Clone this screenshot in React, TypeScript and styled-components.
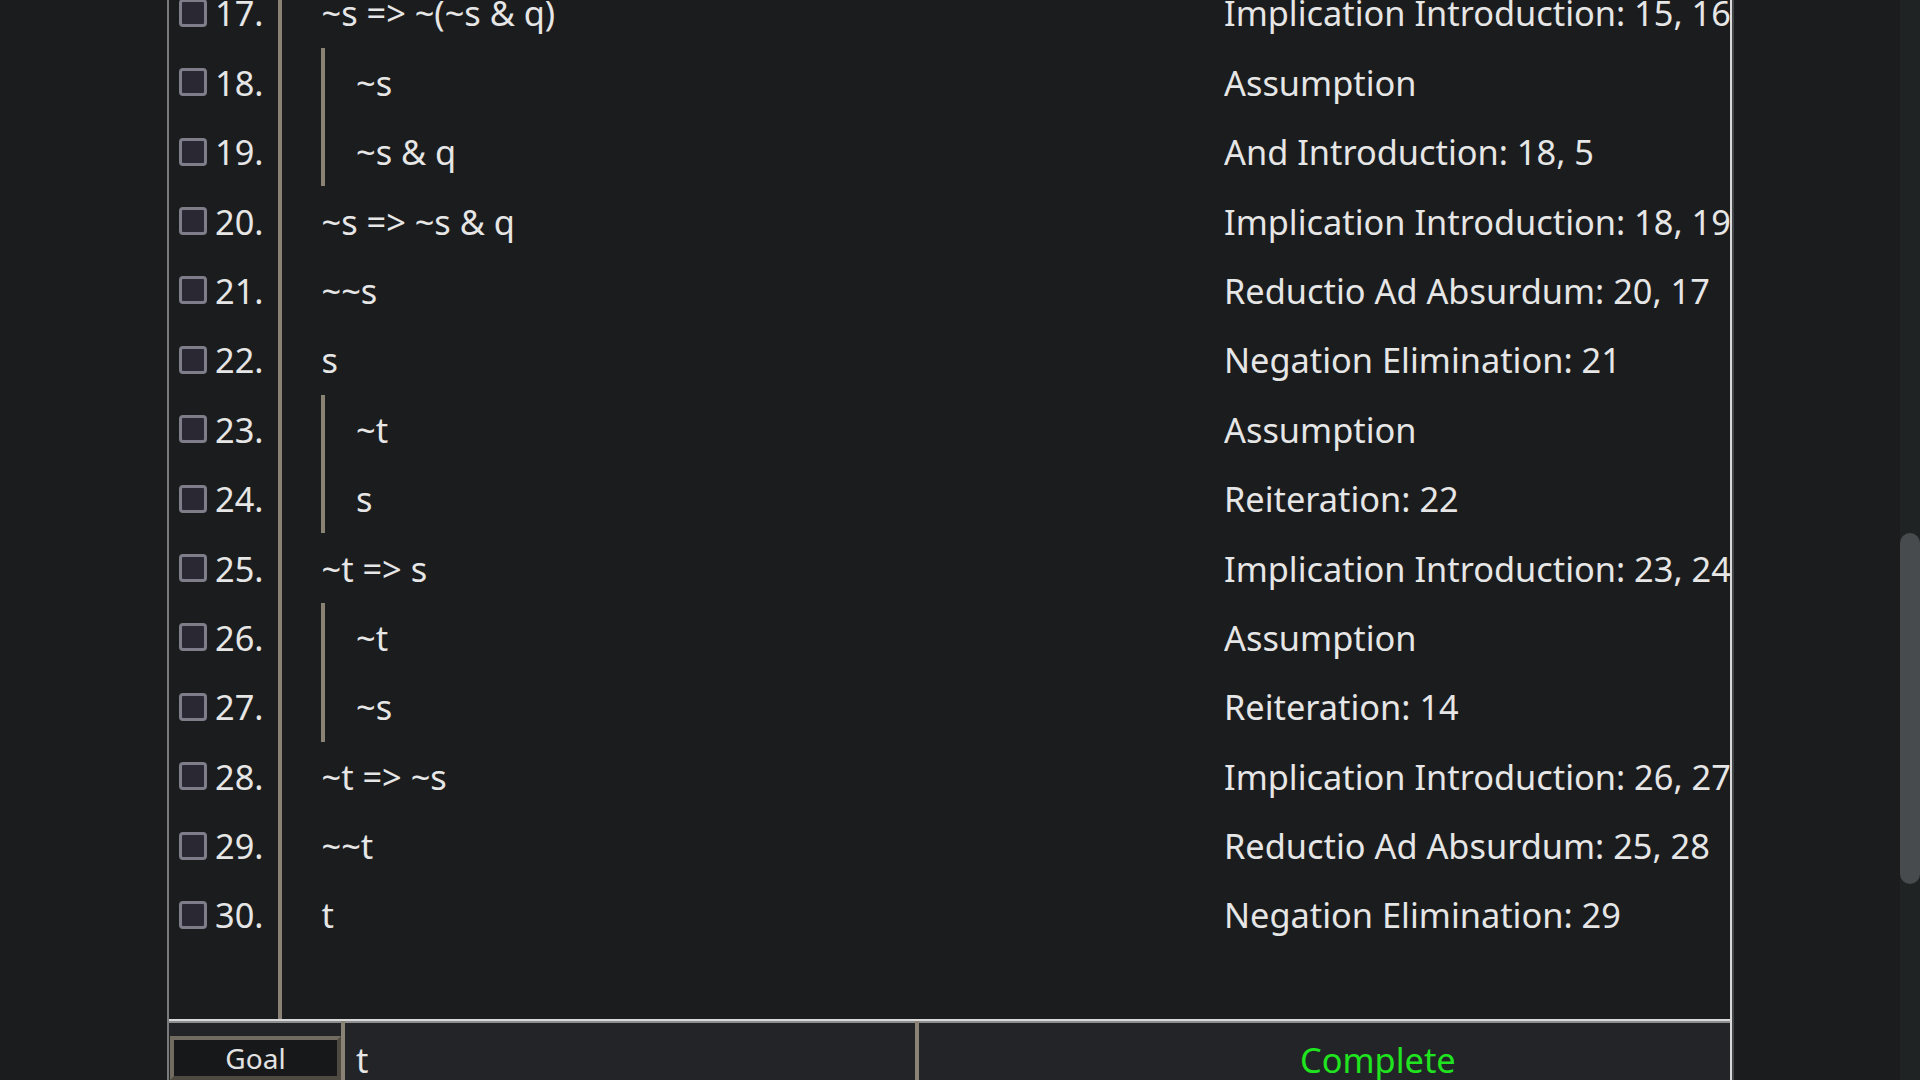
import React from "react";
import styled, { createGlobalStyle } from "styled-components";

const ROW_H = 69.4;
const SCROLL_OFFSET = 21.8;
const TAN = "#8a8274";
const FONT = 34.35;

const GlobalStyle = createGlobalStyle`
  html, body {
    margin: 0;
    padding: 0;
    background: #1b1c1e;
    overflow: hidden;
  }
  body {
    font-family: "Noto Sans", "Open Sans", sans-serif;
    color: #e6e6e6;
  }
`;

const Page = styled.div`
  display: flex;
  width: 100vw;
  height: 100vh;
  overflow: hidden;
  background: #1b1c1e;
`;

const Main = styled.div`
  flex: 1;
  display: flex;
  padding-left: 167px;
  min-width: 0;
`;

const Panel = styled.div`
  width: 1561px;
  display: flex;
  flex-direction: column;
  border-left: 2px solid #7a7a7a;
  border-right: 2px solid #d9d9d9;
  box-shadow: 2px 0 0 #44474a;
  flex: none;
  align-self: flex-start;
`;

const ListArea = styled.div`
  height: 1019px;
  overflow: hidden;
  display: flex;
  flex-direction: column;
`;

const Scroller = styled.div`
  flex: none;
  display: flex;
  margin-top: -${SCROLL_OFFSET}px;
  height: calc(100% + ${SCROLL_OFFSET}px);
`;

const Gutter = styled.div`
  width: 109px;
  flex: none;
  border-right: 4px solid ${TAN};
  display: flex;
  flex-direction: column;
`;

const GutterRow = styled.div`
  height: ${ROW_H}px;
  flex: none;
  display: flex;
  align-items: center;
  padding-left: 10px;
  gap: 8px;
  font-size: ${FONT}px;
  white-space: nowrap;
`;

const Checkbox = styled.span`
  width: 28px;
  height: 28px;
  box-sizing: border-box;
  border: 3px solid #7f7d89;
  border-radius: 4px;
  background: #2a2833;
  flex: none;
`;

const Body = styled.div`
  flex: 1;
  min-width: 0;
  display: flex;
  flex-direction: column;
`;

const Subproof = styled.div`
  margin-left: 39px;
  border-left: 4px solid ${TAN};
  display: flex;
  flex-direction: column;
`;

const Line = styled.div<{ $sub?: boolean }>`
  height: ${ROW_H}px;
  flex: none;
  display: flex;
  align-items: center;
  font-size: ${FONT}px;
  white-space: nowrap;
  padding-left: ${(p) => (p.$sub ? 31 : 39.5)}px;
`;

const Formula = styled.span`
  flex: 1;
  min-width: 0;
`;

const Justification = styled.span`
  width: 506px;
  flex: none;
  overflow: hidden;
`;

const StatusBar = styled.div`
  display: flex;
  height: 76px;
  border-top: 2px solid #d8d8d8;
  box-shadow: inset 0 2px 0 #8f8f8f;
  background: #232427;
  font-size: ${FONT}px;
`;

const GoalCell = styled.div`
  width: 172px;
  flex: none;
  padding: 15px 0 0 1px;
  box-sizing: border-box;
`;

const GoalButton = styled.div`
  width: 171px;
  height: 44px;
  box-sizing: border-box;
  border: 4px solid;
  border-color: #726c60 #4e4a42 #4e4a42 #726c60;
  background: #17181a;
  font-size: 28px;
  color: #e2e2e2;
  display: flex;
  align-items: center;
  justify-content: center;
`;

const Cell = styled.div<{ $width?: number; $pad: number; $color?: string }>`
  ${(p) => (p.$width ? `width: ${p.$width}px; flex: none;` : "flex: 1;")}
  box-sizing: border-box;
  border-left: 4px solid ${TAN};
  padding-left: ${(p) => p.$pad}px;
  display: flex;
  align-items: center;
  color: ${(p) => p.$color ?? "#e6e6e6"};
  white-space: nowrap;
`;

const ScrollTrack = styled.div`
  width: 20px;
  flex: none;
  background: #202324;
  padding-top: 533px;
  box-sizing: border-box;
`;

const Thumb = styled.div`
  height: 351px;
  border-radius: 10px;
  background: #474b4d;
`;

type Row = { n: number; f: string; j: string };
type Block = { sub: boolean; rows: Row[] };

const blocks: Block[] = [
  { sub: false, rows: [{ n: 17, f: "~s => ~(~s & q)", j: "Implication Introduction: 15, 16" }] },
  {
    sub: true,
    rows: [
      { n: 18, f: "~s", j: "Assumption" },
      { n: 19, f: "~s & q", j: "And Introduction: 18, 5" },
    ],
  },
  {
    sub: false,
    rows: [
      { n: 20, f: "~s => ~s & q", j: "Implication Introduction: 18, 19" },
      { n: 21, f: "~~s", j: "Reductio Ad Absurdum: 20, 17" },
      { n: 22, f: "s", j: "Negation Elimination: 21" },
    ],
  },
  {
    sub: true,
    rows: [
      { n: 23, f: "~t", j: "Assumption" },
      { n: 24, f: "s", j: "Reiteration: 22" },
    ],
  },
  { sub: false, rows: [{ n: 25, f: "~t => s", j: "Implication Introduction: 23, 24" }] },
  {
    sub: true,
    rows: [
      { n: 26, f: "~t", j: "Assumption" },
      { n: 27, f: "~s", j: "Reiteration: 14" },
    ],
  },
  {
    sub: false,
    rows: [
      { n: 28, f: "~t => ~s", j: "Implication Introduction: 26, 27" },
      { n: 29, f: "~~t", j: "Reductio Ad Absurdum: 25, 28" },
      { n: 30, f: "t", j: "Negation Elimination: 29" },
    ],
  },
];

const allRows = blocks.flatMap((b) => b.rows);

const renderLines = (rows: Row[], sub: boolean) =>
  rows.map((r) => (
    <Line key={r.n} $sub={sub}>
      <Formula>{r.f}</Formula>
      <Justification>{r.j}</Justification>
    </Line>
  ));

export default function App() {
  return (
    <>
      <GlobalStyle />
      <Page>
        <Main>
          <Panel>
            <ListArea>
              <Scroller>
                <Gutter>
                  {allRows.map((r) => (
                    <GutterRow key={r.n}>
                      <Checkbox />
                      <span>{r.n}.</span>
                    </GutterRow>
                  ))}
                </Gutter>
                <Body>
                  {blocks.map((b, i) =>
                    b.sub ? (
                      <Subproof key={i}>{renderLines(b.rows, true)}</Subproof>
                    ) : (
                      <React.Fragment key={i}>{renderLines(b.rows, false)}</React.Fragment>
                    )
                  )}
                </Body>
              </Scroller>
            </ListArea>
            <StatusBar>
              <GoalCell>
                <GoalButton>Goal</GoalButton>
              </GoalCell>
              <Cell $width={574} $pad={11}>
                t
              </Cell>
              <Cell $pad={381} $color="#1fe41f">
                Complete
              </Cell>
            </StatusBar>
          </Panel>
        </Main>
        <ScrollTrack>
          <Thumb />
        </ScrollTrack>
      </Page>
    </>
  );
}
